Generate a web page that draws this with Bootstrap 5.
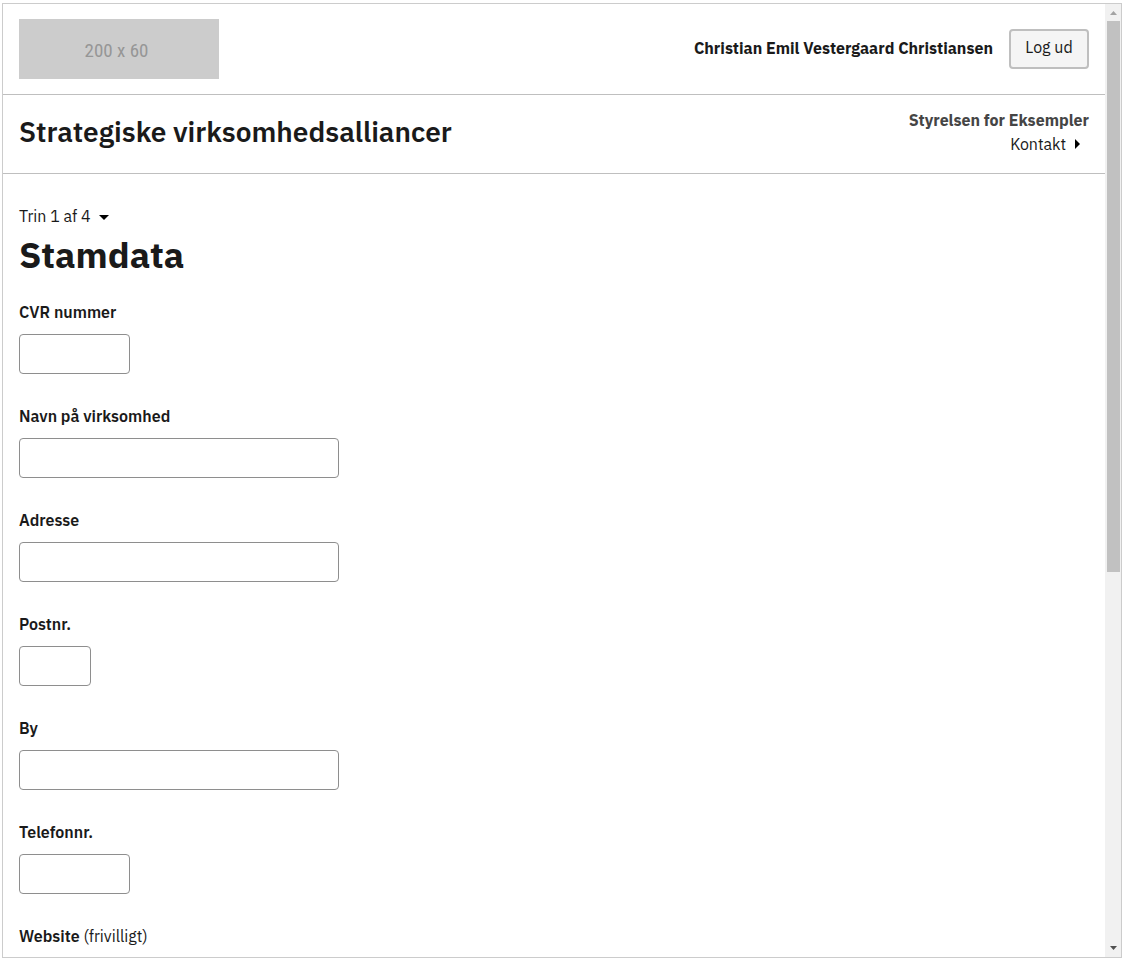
<!DOCTYPE html>
<html lang="da">
<head>
<meta charset="utf-8">
<meta name="viewport" content="width=device-width, initial-scale=1">
<title>Stamdata</title>
<link href="https://cdn.jsdelivr.net/npm/bootstrap@5.3.0/dist/css/bootstrap.min.css" rel="stylesheet">
<style>
  body { font-family: "IBM Plex Sans", Inter, sans-serif; font-size: 16px; line-height: 24px; color: #1a1a1a; background: #fff; }
  .frame { height: calc(100vh - 6px); margin: 3px 3px 3px 2px; border: 1px solid #ccc; }
  .pane { overflow-y: auto; scrollbar-width: none; min-width: 0; }
  .pane::-webkit-scrollbar { display: none; }
  .rule { border-bottom: 1px solid #bfbfbf; }
  .topbar { padding: 15px 16px; }
  .solution { padding: 13px 16px 17px; }
  .text-name { font-weight: 700; padding-bottom: 2px; }
  .logo { width: 200px; height: 60px; background: #ccc; color: #969696; font-family: "Roboto Condensed", Roboto, sans-serif; font-size: 19px; padding: 3px 5px 0 0; }
  .btn-logout { min-width: 80px; height: 40px; padding: 0 14px 4px; border: 2px solid #bfbfbf; border-radius: 4px; background: #f5f5f5; color: #1a1a1a; }
  .solution-title { font-size: 28px; line-height: 32px; font-weight: 600; }
  .authority { font-weight: 700; color: #454545; }
  .plain { color: #1a1a1a; font-weight: 400; text-decoration: none; }
  .content { padding: 30px 16px 32px; }
  .page-title { font-size: 36px; line-height: 54px; font-weight: 700; margin-bottom: 18px; }
  .field { margin-bottom: 30px; }
  .field .form-label { display: block; font-weight: 600; margin-bottom: 10px; }
  .field .form-control { height: 40px; max-width: 320px; border-color: #8e8e8e; border-radius: 4px; }
  .field .w-8ch { width: 111px; }
  .field .w-4ch { width: 72px; }
  .track { width: 16px; background: #f1f1f1; padding: 0 1px 0 2px; }
  .track svg { height: 17px; width: 13px; }
  .thumb-area { min-height: 0; }
  .thumb { height: 60%; background: #c1c1c1; }
</style>
</head>
<body>
<div class="frame d-flex">
  <div class="pane flex-grow-1">
    <header>
      <div class="topbar rule d-flex justify-content-between align-items-center">
        <div class="logo d-flex align-items-center justify-content-center">200 x 60</div>
        <div class="d-flex align-items-center gap-3">
          <span class="text-name">Christian Emil Vestergaard Christiansen</span>
          <button type="button" class="btn btn-logout">Log ud</button>
        </div>
      </div>
      <div class="solution rule d-flex justify-content-between align-items-center">
        <div class="solution-title">Strategiske virksomhedsalliancer</div>
        <div class="text-end">
          <div class="authority">Styrelsen for Eksempler</div>
          <a href="#kontakt" class="plain d-flex justify-content-end align-items-center gap-2 pe-2">Kontakt
            <svg width="7" height="10" viewBox="0 0 7 10" aria-hidden="true"><path d="M1 0l5 5-5 5z"/></svg></a>
        </div>
      </div>
    </header>
    <main class="content">
      <a href="#trin" class="plain d-inline-flex align-items-center gap-2">Trin 1 af 4
        <svg width="10" height="8" viewBox="0 0 10 8" aria-hidden="true"><path d="M0 3h10L5 8z"/></svg></a>
      <h1 class="page-title">Stamdata</h1>
      <form>
        <div class="field"><label class="form-label" for="cvr">CVR nummer</label><input id="cvr" type="text" class="form-control w-8ch"></div>
        <div class="field"><label class="form-label" for="navn">Navn på virksomhed</label><input id="navn" type="text" class="form-control"></div>
        <div class="field"><label class="form-label" for="adresse">Adresse</label><input id="adresse" type="text" class="form-control"></div>
        <div class="field"><label class="form-label" for="postnr">Postnr.</label><input id="postnr" type="text" class="form-control w-4ch"></div>
        <div class="field"><label class="form-label" for="by">By</label><input id="by" type="text" class="form-control"></div>
        <div class="field"><label class="form-label" for="tlf">Telefonnr.</label><input id="tlf" type="tel" class="form-control w-8ch"></div>
        <div class="field"><label class="form-label" for="web">Website <span class="plain">(frivilligt)</span></label><input id="web" type="url" class="form-control"></div>
      </form>
    </main>
  </div>
  <div class="track d-flex flex-column flex-shrink-0" aria-hidden="true">
    <svg viewBox="0 0 13 17"><path d="M3 11h7L6.500 7z" fill="#a3a3a3"/></svg>
    <div class="thumb-area flex-grow-1"><div class="thumb"></div></div>
    <svg viewBox="0 0 13 17"><path d="M3 6h7L6.500 10z" fill="#505050"/></svg>
  </div>
</div>
<script src="https://cdn.jsdelivr.net/npm/bootstrap@5.3.0/dist/js/bootstrap.bundle.min.js"></script>
</body>
</html>
